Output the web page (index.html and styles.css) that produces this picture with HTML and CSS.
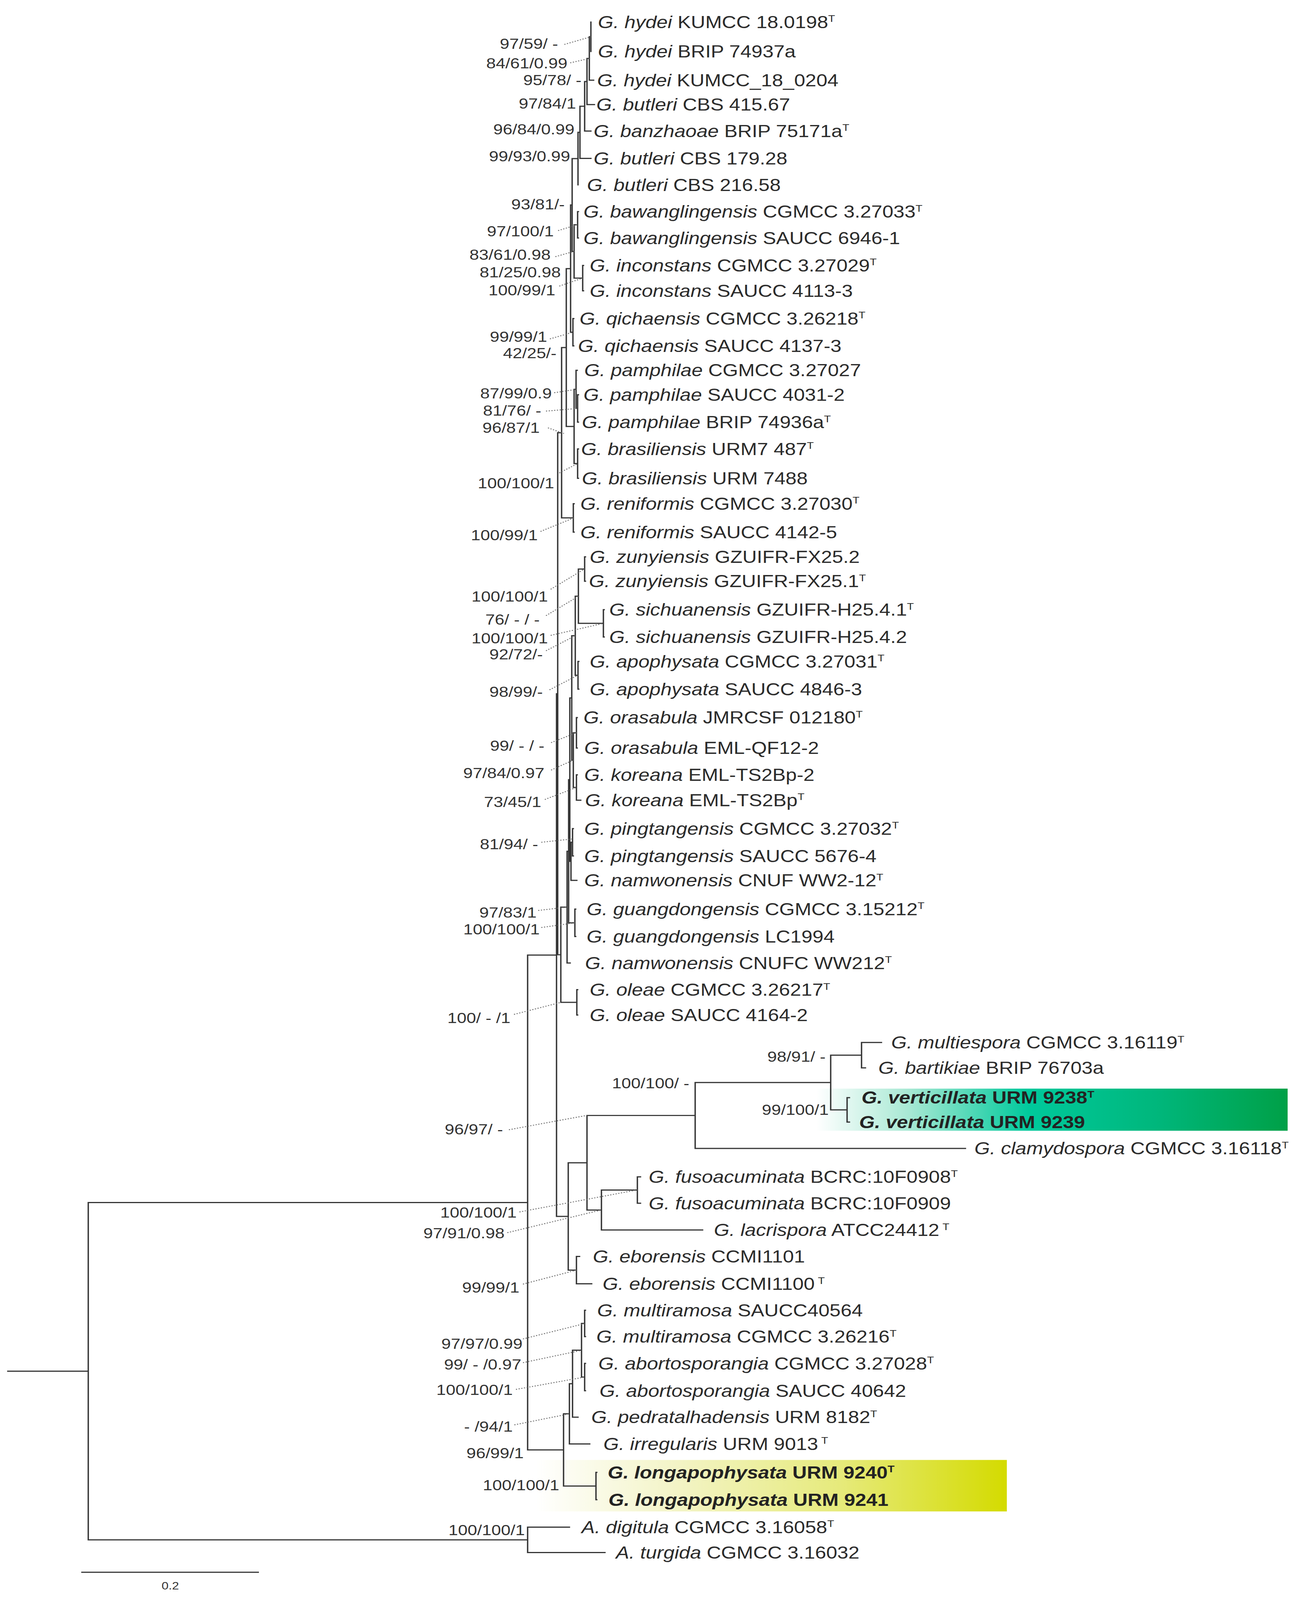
FILE: index.html
```html
<!DOCTYPE html>
<html lang="en">
<head>
<meta charset="utf-8">
<title>Phylogenetic tree</title>
<link rel="stylesheet" href="styles.css">
</head>
<body>
<svg class="fig" viewBox="0 0 3321 4787" preserveAspectRatio="none" xmlns="http://www.w3.org/2000/svg">
  <defs>
    <linearGradient id="gGreen" x1="0" y1="0" x2="1" y2="0">
      <stop offset="0" class="g0"/>
      <stop offset="0.2" class="g1"/>
      <stop offset="0.45" class="g2"/>
      <stop offset="0.72" class="g3"/>
      <stop offset="1" class="g4"/>
    </linearGradient>
    <linearGradient id="gYellow" x1="0" y1="0" x2="1" y2="0">
      <stop offset="0" class="y0"/>
      <stop offset="0.3" class="y1"/>
      <stop offset="0.65" class="y2"/>
      <stop offset="1" class="y3"/>
    </linearGradient>
  </defs>

  <rect class="hl-green" x="2090" y="3257" width="1207" height="126"/>
  <rect class="hl-yellow" x="1372" y="4368" width="1206" height="154"/>

  <path id="tree" class="tree" d=""/>

  <g class="dots">
    <line x1="1445" y1="133" x2="1513" y2="110"/>
    <line x1="1460" y1="188" x2="1509" y2="175"/>
    <line x1="1429" y1="690" x2="1479" y2="672"/>
    <line x1="1422" y1="768" x2="1470" y2="752"/>
    <line x1="1432" y1="856" x2="1492" y2="832"/>
    <line x1="1408" y1="1014" x2="1467" y2="994"/>
    <line x1="1419" y1="1175" x2="1475" y2="1165"/>
    <line x1="1398" y1="1230" x2="1479" y2="1222"/>
    <line x1="1403" y1="1280" x2="1444" y2="1297"/>
    <line x1="1432" y1="1415" x2="1479" y2="1387"/>
    <line x1="1384" y1="1590" x2="1468" y2="1550"/>
    <line x1="1410" y1="1763" x2="1497" y2="1702"/>
    <line x1="1398" y1="1842" x2="1481" y2="1784"/>
    <line x1="1410" y1="1901" x2="1545" y2="1865"/>
    <line x1="1398" y1="1947" x2="1473" y2="1902"/>
    <line x1="1407" y1="2064" x2="1480" y2="2020"/>
    <line x1="1411" y1="2222" x2="1476" y2="2192"/>
    <line x1="1411" y1="2304" x2="1468" y2="2274"/>
    <line x1="1395" y1="2392" x2="1476" y2="2356"/>
    <line x1="1386" y1="2520" x2="1466" y2="2510"/>
    <line x1="1378" y1="2724" x2="1452" y2="2714"/>
    <line x1="1386" y1="2775" x2="1472" y2="2761"/>
    <line x1="1316" y1="3035" x2="1436" y2="2999"/>
    <line x1="1303" y1="3380" x2="1503" y2="3337"/>
    <line x1="1330" y1="3626" x2="1632" y2="3560"/>
    <line x1="1299" y1="3688" x2="1540" y2="3620"/>
    <line x1="1339" y1="3842" x2="1476" y2="3800"/>
    <line x1="1339" y1="4006" x2="1497" y2="3960"/>
    <line x1="1339" y1="4077" x2="1489" y2="4040"/>
    <line x1="1321" y1="4157" x2="1497" y2="4120"/>
    <line x1="1317" y1="4263" x2="1458" y2="4230"/>
  </g>

  <g class="bs">
    <text x="1429" y="146">97/59/ -</text>
    <text x="1453" y="205">84/61/0.99</text>
    <text x="1489" y="255">95/78/ -</text>
    <text x="1475" y="325">97/84/1</text>
    <text x="1471" y="402">96/84/0.99</text>
    <text x="1460" y="483">99/93/0.99</text>
    <text x="1446" y="627">93/81/-</text>
    <text x="1418" y="707">97/100/1</text>
    <text x="1410" y="777">83/61/0.98</text>
    <text x="1436" y="830">81/25/0.98</text>
    <text x="1422" y="883">100/99/1</text>
    <text x="1401" y="1023">99/99/1</text>
    <text x="1425" y="1072">42/25/-</text>
    <text x="1413" y="1192">87/99/0.9</text>
    <text x="1386" y="1243">81/76/ -</text>
    <text x="1382" y="1295">96/87/1</text>
    <text x="1419" y="1461">100/100/1</text>
    <text x="1377" y="1616">100/99/1</text>
    <text x="1403" y="1800">100/100/1</text>
    <text x="1382" y="1869">76/ - / -</text>
    <text x="1403" y="1925">100/100/1</text>
    <text x="1390" y="1973">92/72/-</text>
    <text x="1390" y="2085">98/99/-</text>
    <text x="1394" y="2246">99/ - / -</text>
    <text x="1394" y="2328">97/84/0.97</text>
    <text x="1386" y="2414">73/45/1</text>
    <text x="1378" y="2541">81/94/ -</text>
    <text x="1374" y="2745">97/83/1</text>
    <text x="1382" y="2796">100/100/1</text>
    <text x="1307" y="3061">100/ - /1</text>
    <text x="2114" y="3176">98/91/ -</text>
    <text x="1765" y="3256">100/100/ -</text>
    <text x="2122" y="3336">99/100/1</text>
    <text x="1288" y="3394">96/97/ -</text>
    <text x="1323" y="3643">100/100/1</text>
    <text x="1292" y="3705">97/91/0.98</text>
    <text x="1330" y="3867">99/99/1</text>
    <text x="1338" y="4035">97/97/0.99</text>
    <text x="1335" y="4097">99/ - /0.97</text>
    <text x="1313" y="4174">100/100/1</text>
    <text x="1313" y="4283">- /94/1</text>
    <text x="1341" y="4363">96/99/1</text>
    <text x="1432" y="4459">100/100/1</text>
    <text x="1344" y="4593">100/100/1</text>
  </g>

  <g class="leaf">
    <text x="1531" y="84"><tspan class="sp">G. hydei</tspan> KUMCC 18.0198<tspan class="sup" dy="-18">T</tspan></text>
    <text x="1531" y="172"><tspan class="sp">G. hydei</tspan> BRIP 74937a</text>
    <text x="1529" y="258"><tspan class="sp">G. hydei</tspan> KUMCC_18_0204</text>
    <text x="1527" y="331"><tspan class="sp">G. butleri</tspan> CBS 415.67</text>
    <text x="1520" y="410"><tspan class="sp">G. banzhaoae</tspan> BRIP 75171a<tspan class="sup" dy="-18">T</tspan></text>
    <text x="1520" y="492"><tspan class="sp">G. butleri</tspan> CBS 179.28</text>
    <text x="1503" y="571"><tspan class="sp">G. butleri</tspan> CBS 216.58</text>
    <text x="1494" y="651"><tspan class="sp">G. bawanglingensis</tspan> CGMCC 3.27033<tspan class="sup" dy="-18">T</tspan></text>
    <text x="1494" y="730"><tspan class="sp">G. bawanglingensis</tspan> SAUCC 6946-1</text>
    <text x="1510" y="812"><tspan class="sp">G. inconstans</tspan> CGMCC 3.27029<tspan class="sup" dy="-18">T</tspan></text>
    <text x="1510" y="888"><tspan class="sp">G. inconstans</tspan> SAUCC 4113-3</text>
    <text x="1484" y="971"><tspan class="sp">G. qichaensis</tspan> CGMCC 3.26218<tspan class="sup" dy="-18">T</tspan></text>
    <text x="1480" y="1053"><tspan class="sp">G. qichaensis</tspan> SAUCC 4137-3</text>
    <text x="1496" y="1126"><tspan class="sp">G. pamphilae</tspan> CGMCC 3.27027</text>
    <text x="1494" y="1199"><tspan class="sp">G. pamphilae</tspan> SAUCC 4031-2</text>
    <text x="1490" y="1281"><tspan class="sp">G. pamphilae</tspan> BRIP 74936a<tspan class="sup" dy="-18">T</tspan></text>
    <text x="1488" y="1361"><tspan class="sp">G. brasiliensis</tspan> URM7 487<tspan class="sup" dy="-18">T</tspan></text>
    <text x="1490" y="1449"><tspan class="sp">G. brasiliensis</tspan> URM 7488</text>
    <text x="1486" y="1525"><tspan class="sp">G. reniformis</tspan> CGMCC 3.27030<tspan class="sup" dy="-18">T</tspan></text>
    <text x="1486" y="1610"><tspan class="sp">G. reniformis</tspan> SAUCC 4142-5</text>
    <text x="1510" y="1684"><tspan class="sp">G. zunyiensis</tspan> GZUIFR-FX25.2</text>
    <text x="1508" y="1757"><tspan class="sp">G. zunyiensis</tspan> GZUIFR-FX25.1<tspan class="sup" dy="-18">T</tspan></text>
    <text x="1560" y="1842"><tspan class="sp">G. sichuanensis</tspan> GZUIFR-H25.4.1<tspan class="sup" dy="-18">T</tspan></text>
    <text x="1560" y="1924"><tspan class="sp">G. sichuanensis</tspan> GZUIFR-H25.4.2</text>
    <text x="1510" y="1997"><tspan class="sp">G. apophysata</tspan> CGMCC 3.27031<tspan class="sup" dy="-18">T</tspan></text>
    <text x="1510" y="2080"><tspan class="sp">G. apophysata</tspan> SAUCC 4846-3</text>
    <text x="1494" y="2165"><tspan class="sp">G. orasabula</tspan> JMRCSF 012180<tspan class="sup" dy="-18">T</tspan></text>
    <text x="1496" y="2256"><tspan class="sp">G. orasabula</tspan> EML-QF12-2</text>
    <text x="1496" y="2336"><tspan class="sp">G. koreana</tspan> EML-TS2Bp-2</text>
    <text x="1498" y="2412"><tspan class="sp">G. koreana</tspan> EML-TS2Bp<tspan class="sup" dy="-18">T</tspan></text>
    <text x="1496" y="2497"><tspan class="sp">G. pingtangensis</tspan> CGMCC 3.27032<tspan class="sup" dy="-18">T</tspan></text>
    <text x="1496" y="2579"><tspan class="sp">G. pingtangensis</tspan> SAUCC 5676-4</text>
    <text x="1496" y="2652"><tspan class="sp">G. namwonensis</tspan> CNUF WW2-12<tspan class="sup" dy="-18">T</tspan></text>
    <text x="1502" y="2738"><tspan class="sp">G. guangdongensis</tspan> CGMCC 3.15212<tspan class="sup" dy="-18">T</tspan></text>
    <text x="1502" y="2820"><tspan class="sp">G. guangdongensis</tspan> LC1994</text>
    <text x="1498" y="2899"><tspan class="sp">G. namwonensis</tspan> CNUFC WW212<tspan class="sup" dy="-18">T</tspan></text>
    <text x="1510" y="2979"><tspan class="sp">G. oleae</tspan> CGMCC 3.26217<tspan class="sup" dy="-18">T</tspan></text>
    <text x="1510" y="3055"><tspan class="sp">G. oleae</tspan> SAUCC 4164-2</text>
    <text x="2282" y="3137"><tspan class="sp">G. multiespora</tspan> CGMCC 3.16119<tspan class="sup" dy="-18">T</tspan></text>
    <text x="2249" y="3213"><tspan class="sp">G. bartikiae</tspan> BRIP 76703a</text>
    <text class="bold" x="2206" y="3302"><tspan class="sp">G. verticillata</tspan> URM 9238<tspan class="sup" dy="-18">T</tspan></text>
    <text class="bold" x="2200" y="3375"><tspan class="sp">G. verticillata</tspan> URM 9239</text>
    <text x="2495" y="3454"><tspan class="sp">G. clamydospora</tspan> CGMCC 3.16118<tspan class="sup" dy="-18">T</tspan></text>
    <text x="1661" y="3539"><tspan class="sp">G. fusoacuminata</tspan> BCRC:10F0908<tspan class="sup" dy="-18">T</tspan></text>
    <text x="1661" y="3618"><tspan class="sp">G. fusoacuminata</tspan> BCRC:10F0909</text>
    <text x="1828" y="3698"><tspan class="sp">G. lacrispora</tspan> ATCC24412<tspan class="sup" dx="8" dy="-18">T</tspan></text>
    <text x="1518" y="3777"><tspan class="sp">G. eborensis</tspan> CCMI1101</text>
    <text x="1543" y="3859"><tspan class="sp">G. eborensis</tspan> CCMI1100<tspan class="sup" dx="8" dy="-18">T</tspan></text>
    <text x="1529" y="3938"><tspan class="sp">G. multiramosa</tspan> SAUCC40564</text>
    <text x="1527" y="4017"><tspan class="sp">G. multiramosa</tspan> CGMCC 3.26216<tspan class="sup" dy="-18">T</tspan></text>
    <text x="1532" y="4097"><tspan class="sp">G. abortosporangia</tspan> CGMCC 3.27028<tspan class="sup" dy="-18">T</tspan></text>
    <text x="1535" y="4179"><tspan class="sp">G. abortosporangia</tspan> SAUCC 40642</text>
    <text x="1514" y="4258"><tspan class="sp">G. pedratalhadensis</tspan> URM 8182<tspan class="sup" dy="-18">T</tspan></text>
    <text x="1545" y="4338"><tspan class="sp">G. irregularis</tspan> URM 9013<tspan class="sup" dx="8" dy="-18">T</tspan></text>
    <text class="bold" x="1556" y="4423"><tspan class="sp">G. longapophysata</tspan> URM 9240<tspan class="sup" dy="-18">T</tspan></text>
    <text class="bold" x="1558" y="4505"><tspan class="sp">G. longapophysata</tspan> URM 9241</text>
    <text x="1489" y="4587"><tspan class="sp">A. digitula</tspan> CGMCC 3.16058<tspan class="sup" dy="-18">T</tspan></text>
    <text x="1577" y="4663"><tspan class="sp">A. turgida</tspan> CGMCC 3.16032</text>
  </g>

  <line class="scalebar" x1="208" y1="4704" x2="663" y2="4704"/>
  <text class="scale-label" x="436" y="4756">0.2</text>
</svg>
<script src="script.js"></script>
</body>
</html>
```

FILE: styles.css
```css
html, body {
  margin: 0;
  padding: 0;
  background: #ffffff;
  overflow: hidden;
}

.fig {
  display: block;
  width: 100vw;
  height: 100vh;
}

.tree {
  fill: none;
  stroke: #353535;
  stroke-width: 3.5;
  stroke-linecap: square;
}

.dots line {
  stroke: #6a6a6a;
  stroke-width: 2.6;
  stroke-dasharray: 3 4;
}

.bs text {
  font-family: "Liberation Sans", Arial, sans-serif;
  font-size: 44px;
  fill: #333333;
  text-anchor: end;
}

.leaf text {
  font-family: "Liberation Sans", Arial, sans-serif;
  font-size: 51px;
  fill: #2b2b2b;
}

.leaf .sp {
  font-style: italic;
}

.leaf .bold {
  font-weight: bold;
  fill: #222222;
}

.leaf .sup {
  font-size: 29px;
  font-style: normal;
}

.scalebar {
  stroke: #353535;
  stroke-width: 3.5;
}

.scale-label {
  font-family: "Liberation Sans", Arial, sans-serif;
  font-size: 32px;
  fill: #333333;
  text-anchor: middle;
}

.hl-green { fill: url(#gGreen); }
.hl-yellow { fill: url(#gYellow); }

.g0 { stop-color: #ffffff; }
.g1 { stop-color: #a6e8d3; }
.g2 { stop-color: #00c99c; }
.g3 { stop-color: #00b77c; }
.g4 { stop-color: #00a047; }

.y0 { stop-color: #ffffff; }
.y1 { stop-color: #f3f4c6; }
.y2 { stop-color: #e6ea7a; }
.y3 { stop-color: #d4db00; }
```

FILE: script.js
```js
// Leaf branch positions (y of each leaf row) and branch tip x, in drawing units.
var LY = [66,154,240,313,392,474,553,633,712,794,870,953,1035,1108,1181,1263,1343,1431,1507,1592,
  1666,1739,1824,1906,1979,2062,2147,2238,2318,2394,2479,2561,2634,2720,2802,2881,2961,3037,
  3119,3195,3284,3357,3436,3521,3600,3680,3759,3841,3920,3999,4079,4161,4240,4320,4405,4487,4569,4645];
var TIP = [1513,1513,1520,1522,1513,1513,1480,1481,1481,1494,1494,1469,1469,1478,1481,1481,1481,1481,1470,1470,
  1499,1499,1547,1547,1482,1482,1478,1478,1478,1487,1468,1468,1477,1474,1474,1460,1479,1479,
  2257,2216,2175,2175,2472,1640,1640,1799,1484,1515,1499,1499,1499,1499,1480,1510,1528,1528,1458,1549];

function N(x) { return { x: x, c: Array.prototype.slice.call(arguments, 1) }; }

var N1 = N(1513, 1, 2), N2 = N(1509, N1, 3), N3 = N(1503, N2, 4), N4 = N(1497, N3, 5),
    N5 = N(1485, N4, 6), N6 = N(1480, N5, 7);
var BW = N(1479, 8, 9), IN = N(1492, 10, 11), BI = N(1470, BW, IN), N7 = N(1465, N6, BI);
var QI = N(1467, 12, 13), N8 = N(1461, N7, QI);
var PA1 = N(1479, 15, 16), PA2 = N(1475, 14, PA1), BR = N(1479, 17, 18), PB = N(1470, PA2, BR);
var P1 = N(1450, N8, PB), R = N(1468, 19, 20), P = N(1438, P1, R);
var ZU = N(1497, 21, 22), SI = N(1545, 23, 24), ZS = N(1481, ZU, SI), AP = N(1480, 25, 26), Z1 = N(1473, ZS, AP);
var OR = N(1476, 27, 28), KO = N(1476, 29, 30), OK = N(1468, OR, KO), AOKZ = N(1464, Z1, OK);
var PT = N(1466, 31, 32), PTN = N(1462, PT, 33), Q5 = N(1459, AOKZ, PTN);
var GD = N(1472, 34, 35), Q2 = N(1456, Q5, GD), Q1 = N(1452, Q2, 36), OL = N(1477, 37, 38), Q = N(1436, Q1, OL);
var B1 = N(1428, P, Q);
var MB = N(2206, 39, 40), V = N(2169, 41, 42), Y1 = N(2127, MB, V), Y = N(1780, Y1, 43);
var FU = N(1632, 44, 45), Z = N(1540, FU, 46), X = N(1503, Y, Z), EB = N(1476, 47, 48), B2 = N(1455, X, EB);
var B = N(1425, B1, B2);
var MR = N(1497, 49, 50), AB = N(1497, 51, 52), F = N(1489, MR, AB), E = N(1466, F, 53), D = N(1458, E, 54);
var L = N(1526, 55, 56), C = N(1443, D, L), A = N(1351, B, C);
var OG = N(1351, 57, 58), ROOT = N(226, A, OG);

var d = "";
function lay(n) {
  if (typeof n === "number") { return { x: TIP[n - 1], y: LY[n - 1] }; }
  var kids = n.c.map(lay);
  var y0 = kids[0].y, y1 = kids[kids.length - 1].y;
  d += "M" + n.x + " " + y0 + "V" + y1;
  kids.forEach(function (k) { d += "M" + n.x + " " + k.y + "H" + k.x; });
  return { x: n.x, y: (y0 + y1) / 2 };
}
var r = lay(ROOT);
d += "M20 " + r.y + "H" + ROOT.x;
document.getElementById("tree").setAttribute("d", d);
```
